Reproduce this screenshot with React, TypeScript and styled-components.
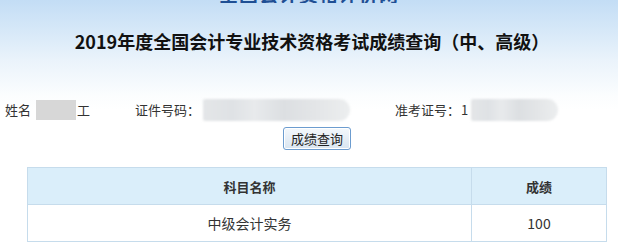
import React from "react";
import styled, { createGlobalStyle } from "styled-components";

const GlobalStyle = createGlobalStyle`
  html, body {
    margin: 0;
    padding: 0;
    background: #ffffff;
  }
  body {
    font-family: "Noto Sans CJK SC", "Noto Sans", sans-serif;
    color: #222222;
  }
`;

const Page = styled.div`
  width: 618px;
  height: 242px;
  overflow: hidden;
  background: linear-gradient(
    to bottom,
    #c3ddf5 0px,
    #d6e8f8 30px,
    #eaf3fb 60px,
    #fbfdfe 95px,
    #ffffff 110px
  );
`;

/* top heading of the site, scrolled so only the bottom of its glyphs shows */
const Banner = styled.div`
  height: 3px;
  overflow: hidden;
  text-align: center;
`;

const BannerText = styled.div`
  margin-top: -16px;
  height: 19px;
  font-size: 19px;
  line-height: 19px;
  font-weight: 700;
  letter-spacing: 1px;
  color: #1f4f94;
  white-space: nowrap;
`;

const Title = styled.h1`
  margin: 26px 0 0;
  padding-left: 6px;
  text-align: center;
  font-size: 18px;
  line-height: 24px;
  font-weight: 700;
  color: #111111;
  white-space: nowrap;
`;

const InfoRow = styled.div`
  margin-top: 45px;
  padding-left: 5px;
  display: grid;
  grid-template-columns: 130px 260px auto;
  align-items: center;
  height: 24px;
  font-size: 13px;
  color: #333333;
`;

const Field = styled.div`
  display: flex;
  align-items: center;
  white-space: nowrap;
`;

const Label = styled.span`
  line-height: 24px;
`;

const Masked = styled.span<{ $w: number; $soft?: boolean }>`
  display: inline-block;
  width: ${(p) => p.$w}px;
  height: ${(p) => (p.$soft ? 22 : 20)}px;
  margin-left: ${(p) => (p.$soft ? 3 : 5)}px;
  background: ${(p) =>
    p.$soft
      ? "linear-gradient(to right, #e4e6e8 0%, #dfe2e5 20%, #e8eaec 35%, #dcdfe2 55%, #e3e5e7 75%, #eceeef 100%)"
      : "#d7d7d7"};
  border-radius: ${(p) => (p.$soft ? "2px 11px 11px 2px" : "0")};
  filter: ${(p) => (p.$soft ? "blur(1.2px)" : "none")};
`;

const Tail = styled.span`
  margin-left: 1px;
  line-height: 24px;
`;

const ButtonRow = styled.div`
  margin-top: 5px;
  display: flex;
  justify-content: center;
  padding-left: 16px;
`;

const QueryButton = styled.button`
  width: 68px;
  height: 23px;
  padding: 0;
  font-family: "Noto Sans CJK SC", sans-serif;
  font-size: 13px;
  color: #222222;
  background: linear-gradient(to bottom, #f4f8fc 0%, #e6eef6 50%, #d9e5f0 100%);
  border: 1px solid #6c9ccf;
  border-radius: 3px;
  box-shadow: inset 0 0 0 1px #ffffff;
  cursor: pointer;
`;

const Table = styled.table`
  margin: 17px 0 0 27px;
  width: 580px;
  border-collapse: collapse;
  table-layout: fixed;
`;

const HeadCell = styled.th<{ $w?: number }>`
  height: 36px;
  width: ${(p) => (p.$w ? `${p.$w}px` : "auto")};
  padding: 0;
  background: #daeefa;
  border: 1px solid #c6dcec;
  font-size: 13px;
  font-weight: 700;
  color: #333333;
  text-align: center;
`;

const Cell = styled.td`
  height: 36px;
  padding: 0;
  background: #ffffff;
  border: 1px solid #c6dcec;
  font-size: 14px;
  color: #333333;
  text-align: center;
`;

const rows = [{ subject: "中级会计实务", score: "100" }];

export default function App() {
  return (
    <>
      <GlobalStyle />
      <Page>
        <Banner>
          <BannerText>全国会计资格评价网</BannerText>
        </Banner>
        <Title>2019年度全国会计专业技术资格考试成绩查询（中、高级）</Title>
        <InfoRow>
          <Field>
            <Label>姓名</Label>
            <Masked $w={40} />
            <Tail>工</Tail>
          </Field>
          <Field>
            <Label>证件号码：</Label>
            <Masked $w={147} $soft />
          </Field>
          <Field>
            <Label>准考证号：</Label>
            <Tail>1</Tail>
            <Masked $w={87} $soft />
          </Field>
        </InfoRow>
        <ButtonRow>
          <QueryButton type="button">成绩查询</QueryButton>
        </ButtonRow>
        <Table>
          <thead>
            <tr>
              <HeadCell>科目名称</HeadCell>
              <HeadCell $w={134}>成绩</HeadCell>
            </tr>
          </thead>
          <tbody>
            {rows.map((r) => (
              <tr key={r.subject}>
                <Cell>{r.subject}</Cell>
                <Cell>{r.score}</Cell>
              </tr>
            ))}
          </tbody>
        </Table>
      </Page>
    </>
  );
}
